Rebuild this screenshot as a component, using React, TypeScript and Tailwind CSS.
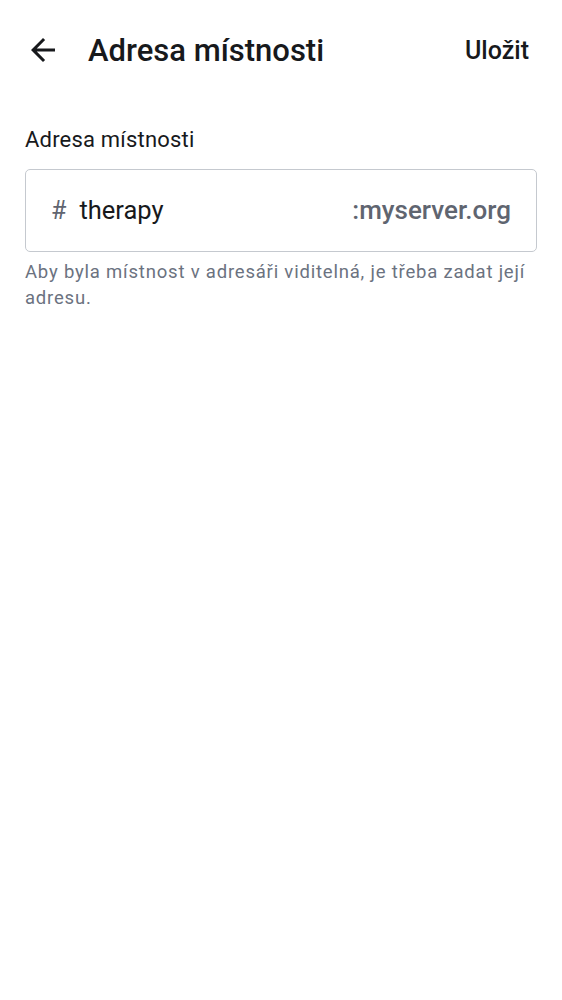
export default function App() {
  return (
    <div className="min-h-screen w-full bg-white font-['Roboto',sans-serif] text-[#17191c]">
      {/* Toolbar */}
      <div className="flex h-[100px] items-center">
        <button className="ml-[25px] flex h-[36px] w-[36px] items-center justify-center">
          <svg width="36" height="36" viewBox="0 0 24 24" fill="#17191c">
            <path d="M20 11H7.83l5.59-5.59L12 4l-8 8 8 8 1.41-1.41L7.83 13H20v-2z" />
          </svg>
        </button>
        <h1 className="ml-[27px] flex-1 text-[31px] font-medium leading-none">Adresa místnosti</h1>
        <button className="mr-[33px] text-[25px] font-medium leading-none">Uložit</button>
      </div>

      {/* Content */}
      <div className="px-[25px] pt-[27px]">
        <div className="text-[22px] leading-[26px] tracking-[0.2px]">Adresa místnosti</div>
        <div className="mt-[16px] flex h-[83px] items-center rounded-[5px] border border-[#c5c9cf] px-[25px]">
          <span className="text-[25px] text-[#5f6570]">#</span>
          <span className="ml-[13px] flex-1 text-[25.5px]">therapy</span>
          <span className="text-[26px] font-medium text-[#5f6570]">:myserver.org</span>
        </div>
        <p className="mt-[7px] text-[18.5px] leading-[26px] tracking-[0.8px] text-[#6b7280]">
          Aby byla místnost v adresáři viditelná, je třeba zadat její adresu.
        </p>
      </div>
    </div>
  );
}
